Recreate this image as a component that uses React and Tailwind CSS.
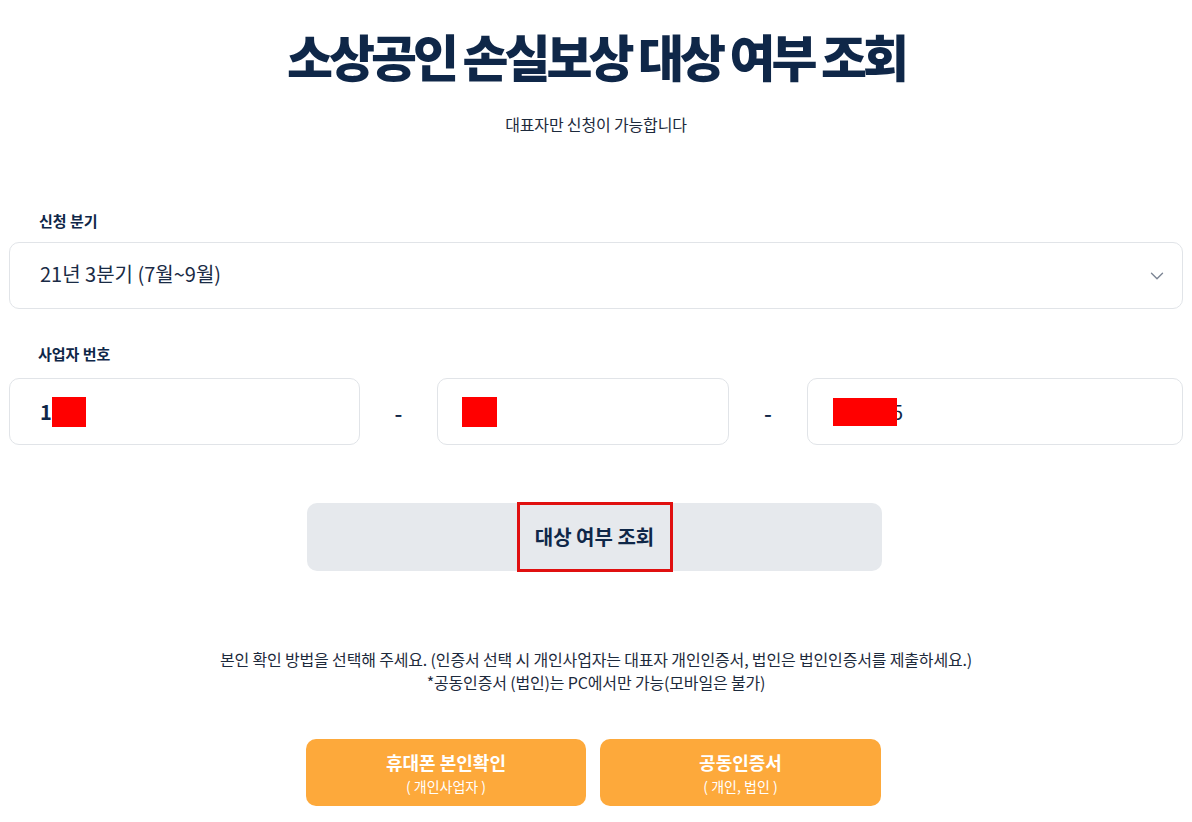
import React from "react";
import { ChevronDown } from "lucide-react";

const font = { fontFamily: '"Noto Sans CJK KR", "Noto Sans", sans-serif' };

function Redact({ w, h }) {
  return <span className={`relative z-10 inline-block bg-[#ff0000] align-middle ${w} ${h}`} />;
}

export default function App() {
  return (
    <div className="min-h-screen bg-white text-[#0f2748]" style={font}>
      <div className="px-[9px] pt-[20px] pb-[17px]">
        <h1 className="text-center text-[50px] font-extrabold leading-[70px] tracking-[-0.08em]">
          소상공인 손실보상 대상 여부 조회
        </h1>
        <p className="mt-[24px] text-center text-[16px] leading-[20px] tracking-[-0.01em] text-[#1d2a3c]">대표자만 신청이 가능합니다</p>

        {/* 신청 분기 */}
        <div className="mt-[77px]">
          <label className="block pl-[30px] text-[15px] font-bold leading-[20px]">신청 분기</label>
          <div className="mt-[11px] flex h-[67px] items-center justify-between rounded-[10px] border border-[#e1e4e8] pl-[30px] pr-[14px]">
            <span className="-mt-[3px] text-[20px] leading-[28px] text-[#1a2b45]">21년 3분기 (7월~9월)</span>
            <ChevronDown size={22} strokeWidth={1.5} className="text-[#7c8594]" />
          </div>
        </div>

        {/* 사업자 번호 */}
        <div className="mt-[35px]">
          <label className="block pl-[29px] text-[15px] font-bold leading-[20px]">사업자 번호</label>
          <div className="mt-[14px] grid grid-cols-[351px_77px_292px_78px_1fr] items-center">
            <div className="flex h-[67px] items-center rounded-[10px] border border-[#e1e4e8] pl-[30px]">
              <span className="text-[20px] font-bold leading-[28px]">1</span>
              <Redact w="w-[34px]" h="h-[30px]" />
            </div>
            <div className="text-center text-[22px] font-medium leading-[28px]">-</div>
            <div className="flex h-[67px] items-center rounded-[10px] border border-[#e1e4e8] pl-[24px]">
              <Redact w="w-[35px]" h="h-[30px]" />
            </div>
            <div className="text-center text-[22px] font-medium leading-[28px]">-</div>
            <div className="flex h-[67px] items-center rounded-[10px] border border-[#e1e4e8] pl-[25px]">
              <Redact w="w-[64px]" h="h-[28px]" />
              <span className="-ml-[5px] text-[20px] leading-[28px]">5</span>
            </div>
          </div>
        </div>

        {/* 조회 버튼 */}
        <div className="mt-[58px] flex justify-center pr-[3px]">
          <button className="relative flex h-[68px] w-[575px] items-center justify-center rounded-[10px] bg-[#e6e9ed] text-[20px] font-bold text-[#0f2748]">
            <span className="flex h-[70px] w-[156px] items-center justify-center border-[3px] border-[#e01010]">
              대상 여부 조회
            </span>
          </button>
        </div>

        {/* 안내 */}
        <div className="mt-[77px] text-center text-[16px] leading-[23px] tracking-[-0.01em] text-[#1d2a3c]">
          <p>본인 확인 방법을 선택해 주세요. (인증서 선택 시 개인사업자는 대표자 개인인증서, 법인은 법인인증서를 제출하세요.)</p>
          <p>*공동인증서 (법인)는 PC에서만 가능(모바일은 불가)</p>
        </div>

        <div className="mt-[45px] flex justify-center gap-[14px] pr-[5px]">
          <button className="flex h-[67px] w-[280px] flex-col items-center justify-center rounded-[10px] bg-[#fda93b] text-white">
            <span className="text-[18px] font-bold leading-[24px]">휴대폰 본인확인</span>
            <span className="mt-[3px] text-[14px] leading-[18px]">( 개인사업자 )</span>
          </button>
          <button className="flex h-[67px] w-[281px] flex-col items-center justify-center rounded-[10px] bg-[#fda93b] text-white">
            <span className="text-[18px] font-bold leading-[24px]">공동인증서</span>
            <span className="mt-[3px] text-[14px] leading-[18px]">( 개인, 법인 )</span>
          </button>
        </div>
      </div>
    </div>
  );
}
